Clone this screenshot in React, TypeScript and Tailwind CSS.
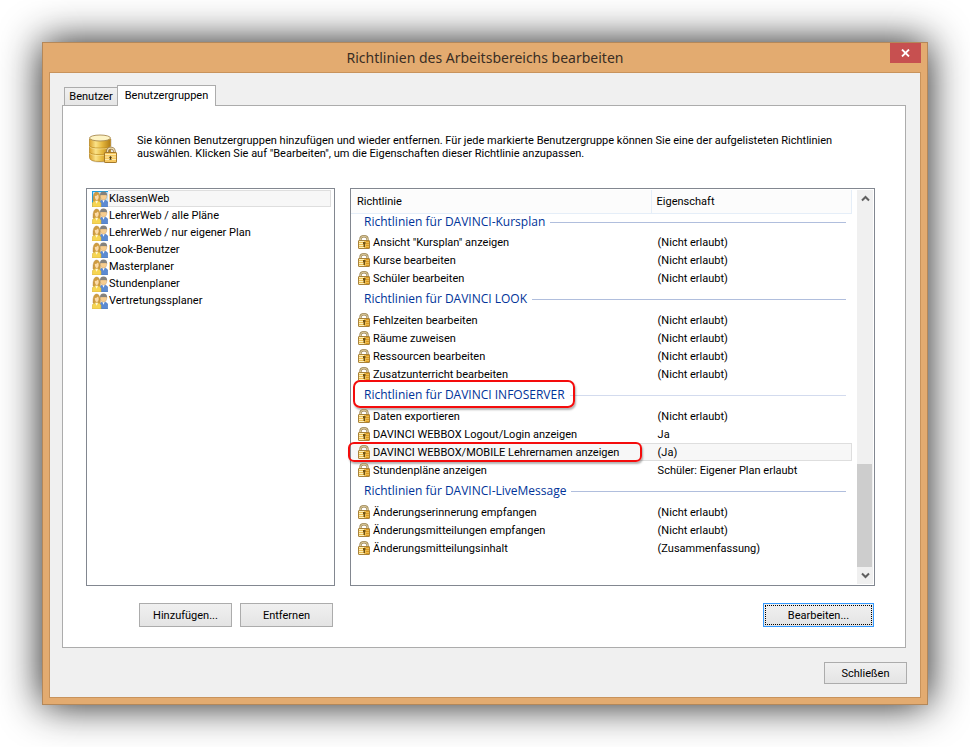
type Policy = { name: string; value: string; selected?: boolean };
type Section = { title: string; marked?: boolean; policies: Policy[] };

const DENIED = '(Nicht erlaubt)';

const userGroups = [
  'KlassenWeb',
  'LehrerWeb / alle Pläne',
  'LehrerWeb / nur eigener Plan',
  'Look-Benutzer',
  'Masterplaner',
  'Stundenplaner',
  'Vertretungssplaner',
];

const sections: Section[] = [
  {
    title: 'Richtlinien für DAVINCI-Kursplan',
    policies: [
      { name: 'Ansicht "Kursplan" anzeigen', value: DENIED },
      { name: 'Kurse bearbeiten', value: DENIED },
      { name: 'Schüler bearbeiten', value: DENIED },
    ],
  },
  {
    title: 'Richtlinien für DAVINCI LOOK',
    policies: [
      { name: 'Fehlzeiten bearbeiten', value: DENIED },
      { name: 'Räume zuweisen', value: DENIED },
      { name: 'Ressourcen bearbeiten', value: DENIED },
      { name: 'Zusatzunterricht bearbeiten', value: DENIED },
    ],
  },
  {
    title: 'Richtlinien für DAVINCI INFOSERVER',
    marked: true,
    policies: [
      { name: 'Daten exportieren', value: DENIED },
      { name: 'DAVINCI WEBBOX Logout/Login anzeigen', value: 'Ja' },
      { name: 'DAVINCI WEBBOX/MOBILE Lehrernamen anzeigen', value: '(Ja)', selected: true },
      { name: 'Stundenpläne anzeigen', value: 'Schüler: Eigener Plan erlaubt' },
    ],
  },
  {
    title: 'Richtlinien für DAVINCI-LiveMessage',
    policies: [
      { name: 'Änderungserinnerung empfangen', value: DENIED },
      { name: 'Änderungsmitteilungen empfangen', value: DENIED },
      { name: 'Änderungsmitteilungsinhalt', value: '(Zusammenfassung)' },
    ],
  },
];

function LockIcon() {
  return (
    <svg className="block shrink-0" width="12" height="14" viewBox="0 0 12 14" aria-hidden="true">
      <path d="M2.500 6.500V4q0-2.800 3.500-2.800T9.500 4v2.500" fill="none" stroke="#a08a5a" strokeWidth="2.400" />
      <path d="M2.500 6.500V4q0-2.800 3.500-2.800T9.500 4v2.500" fill="none" stroke="#e2d3a4" strokeWidth="0.900" />
      <rect x="0.500" y="5.500" width="11" height="8" rx="0.500" fill="#ecbc50" stroke="#a8823a" />
      <path d="M1 6.500h5M1 8.500h5M1 10.500h5M1 12.500h5" stroke="#fdf0b8" />
      <path d="M8 6.500h3M8 8.500h3M8 10.500h3M8 12.500h3" stroke="#dc9a20" />
      <path d="M5 7h2.500v2H7v3H5.500V9H5z" fill="#705214" />
    </svg>
  );
}

function UsersIcon({ selected = false }: { selected?: boolean }) {
  return (
    <svg className="block shrink-0" width="16" height="16" viewBox="0 0 16 16" aria-hidden="true">
      {selected && <path d="M0 0h16v1H1v15H0z" fill="#1a9fe0" />}
      {selected && <path d="M1 1h15v12H1z" fill="#c3e0f3" />}
      <path d="M8 16V11q1-2.200 3.500-2.200t4.300 2.200v5z" fill="#5b8ad2" stroke="#4771b4" strokeWidth="0.500" />
      <path d="M10.300 8.800l1.200 3 1.300-3z" fill="#fff" />
      <path d="M8.400 4h6.400q.2 5-3.300 5T8.400 4z" fill="#f6cd90" stroke="#c09763" strokeWidth="0.400" />
      <path d="M8 4.500Q7.800.5 11.500.5T15.200 4.500L14 4H9z" fill="#85827c" />
      <path d="M1 9.500Q.8 1 4.600 1T8.400 9.500L7 11H2.300z" fill="#cf9c40" stroke="#ad7f34" strokeWidth="0.400" />
      <path d="M.2 16V12Q1.200 9.800 4.600 9.800T9 12v4z" fill="#f6d552" stroke="#cda636" strokeWidth="0.500" />
      <path d="M2.800 5q1.800 0 3.200-1.500.8 1 .7 3Q6.300 9 4.700 9T2.800 5z" fill="#fbdba8" />
      <path d="M3.200 9.800l1.400 3 1.500-3z" fill="#fff6d8" />
    </svg>
  );
}

function DatabaseLockIcon() {
  return (
    <svg className="block" width="32" height="32" viewBox="0 0 32 32" aria-hidden="true">
      <defs>
        <linearGradient id="drum" x1="0" x2="1">
          <stop offset="0" stopColor="#d9a02c" />
          <stop offset="0.300" stopColor="#fbe388" />
          <stop offset="0.600" stopColor="#e6b83e" />
          <stop offset="1" stopColor="#b07c14" />
        </linearGradient>
      </defs>
      <path d="M3 5v20q0 4 11 4t10-4V5z" fill="#d6d6d6" opacity="0.600" />
      <path d="M1.500 5v18.500q0 4 10.500 4t10.500-4V5z" fill="url(#drum)" stroke="#b98a2a" strokeWidth="0.800" />
      <path d="M1.500 11.500q0 2.600 10.500 2.600t10.500-2.600M1.500 18q0 2.600 10.500 2.600T22.500 18" fill="none" stroke="#bd8a20" strokeWidth="0.800" />
      <path d="M1.500 12.300q0 2.600 10.500 2.600t10.500-2.600M1.500 18.800q0 2.600 10.500 2.600t10.500-2.600" fill="none" stroke="#fdeeb0" strokeWidth="0.500" />
      <ellipse cx="12" cy="4" rx="10.500" ry="3" fill="#fdf3c4" stroke="#a88a50" strokeWidth="0.900" />
      <path d="M19.500 20v-2.500a3.400 3.400 0 0 1 6.800 0V20" fill="none" stroke="#957a50" strokeWidth="2.800" />
      <path d="M19.500 20v-2.500a3.400 3.400 0 0 1 6.800 0V20" fill="none" stroke="#f0deb0" strokeWidth="1.200" />
      <rect x="16.500" y="18.500" width="12" height="10" rx="0.600" fill="#f7c860" stroke="#a5792a" />
      <path d="M17 20.500h11M17 23h11M17 25.500h11" stroke="#fdebae" />
      <path d="M21 23.500l1.500-1.500 1.500 1.500-.9.500v1l.9.800h-3l.9-.8v-1z" fill="#4e3b12" />
    </svg>
  );
}

function Chevron({ down = false }: { down?: boolean }) {
  return (
    <svg width="9" height="7" viewBox="0 0 9 7" aria-hidden="true">
      <path d={down ? 'M1 1.500l3.500 3.500L8 1.500' : 'M1 5.500L4.500 2 8 5.500'} fill="none" stroke="#606060" strokeWidth="2" />
    </svg>
  );
}

const buttonStyle = 'border border-[#acacac] bg-linear-to-b from-[#f0f0f0] to-[#e4e4e4] text-center';

export default function App() {
  return (
    <div className="bg-white p-[42px] font-['Roboto','Noto_Sans',sans-serif] text-[11px] leading-[13px] text-black">
      <main className="border border-[#b4885a] bg-[#e3ab70] px-[6px] pb-[6px] shadow-[0_0_38px_rgba(0,0,0,0.9)]">
        <header className="grid h-[29px] grid-cols-[36px_1fr_36px]">
          <h1 className="col-start-2 pt-[5px] text-center font-['Noto_Sans','Open_Sans',sans-serif] text-[14px] leading-[20px] text-[#3a2e24]">
            Richtlinien des Arbeitsbereichs bearbeiten
          </h1>
          <button type="button" aria-label="Fenster schließen" className="flex h-5 w-[31px] items-center justify-center self-start justify-self-end bg-[#c75050]">
            <svg width="9" height="8" viewBox="0 0 9 8" aria-hidden="true">
              <path d="M1 .5l7 7M8 .5l-7 7" stroke="#fff" strokeWidth="1.800" />
            </svg>
          </button>
        </header>

        <div className="border border-[#c8935c] bg-[#f0f0f0] px-3 pt-3 pb-[13px]">
          <div role="tablist" className="flex items-end pl-[2px]">
            <button type="button" role="tab" aria-selected="false" className="h-[18px] w-[54px] border border-b-0 border-[#acacac] bg-linear-to-b from-[#f0f0f0] to-[#e6e6e6]">
              Benutzer
            </button>
            <button type="button" role="tab" aria-selected="true" className="relative z-10 -mb-px -ml-px h-[21px] w-[99px] border border-b-0 border-[#acacac] bg-white pb-px">
              Benutzergruppen
            </button>
          </div>

          <section role="tabpanel" className="mr-[2px] border border-[#acacac] bg-white px-[23px] pb-5">
            <div className="flex pt-7">
              <div className="w-[51px] shrink-0 pl-[2px]">
                <DatabaseLockIcon />
              </div>
              <p className="max-w-[704px]">
                Sie können Benutzergruppen hinzufügen und wieder entfernen. Für jede markierte Benutzergruppe können Sie eine der aufgelisteten Richtlinien auswählen. Klicken Sie auf "Bearbeiten", um die Eigenschaften dieser Richtlinie anzupassen.
              </p>
            </div>

            <div className="mt-[22px] flex gap-[15px] pr-[7px]">
              <ul aria-label="Benutzergruppen" className="w-[249px] shrink-0 border border-[#828790] py-px pr-[3px] pl-[5px]">
                {userGroups.map((group, index) => (
                  <li key={group} className="flex h-[17px] items-center">
                    <UsersIcon selected={index === 0} />
                    <span className={index === 0 ? 'flex h-[17px] flex-1 items-center border border-l-0 border-[#dedede] bg-[#f7f7f7] pl-px' : 'pl-px'}>
                      {group}
                    </span>
                  </li>
                ))}
              </ul>

              <div className="flex min-h-[398px] min-w-0 flex-1 border border-[#828790] py-px pr-px">
                <div className="min-w-0 flex-1">
                  <table className="w-full table-fixed border-separate border-spacing-0 text-left">
                    <colgroup>
                      <col className="w-[60%]" />
                      <col className="w-[40%]" />
                    </colgroup>
                    <thead>
                      <tr className="h-6 bg-[#fcfcfc]">
                        <th className="border-r border-b border-[#e5eef8] p-0 pl-[6px] font-normal">Richtlinie</th>
                        <th className="border-r border-b border-[#e5eef8] p-0 pl-[5px] font-normal">Eigenschaft</th>
                      </tr>
                    </thead>
                    {sections.map((section, index) => (
                      <tbody key={section.title}>
                        <tr className={index === 0 ? 'h-[19px] align-top' : 'h-6'}>
                          <th colSpan={2} scope="rowgroup" className="p-0 pr-[6px] pl-[2px] font-normal">
                            <div className="flex items-center gap-[5px]">
                              <span className="relative pl-[11px] font-['Open_Sans','Noto_Sans',sans-serif] text-[12px] leading-[16px] whitespace-nowrap text-[#003399]">
                                {section.title}
                                {section.marked && (
                                  <span className="absolute -top-[7px] left-0 h-7 w-[222px] rounded-[7px] border-2 border-[#f40c0c] shadow-[1px_2px_2px_rgba(0,0,0,0.3)]" />
                                )}
                              </span>
                              <span className={section.marked ? 'h-px flex-1 bg-[#d3dbee]' : 'h-px flex-1 bg-[#b0bedd]'} />
                            </div>
                          </th>
                        </tr>
                        {section.policies.map((policy) => (
                          <tr key={policy.name} className="h-[18px]">
                            <td className={policy.selected ? 'border-y border-[#dedede] bg-[#f7f7f7] p-0' : 'p-0'}>
                              <div className="relative flex items-center gap-[3px] pl-[7px] whitespace-nowrap">
                                <LockIcon />
                                <span>{policy.name}</span>
                                {policy.selected && (
                                  <span className="absolute -top-[3px] -left-[3px] h-5 w-[294px] rounded-[6px] border-2 border-[#f40c0c] shadow-[1px_2px_2px_rgba(0,0,0,0.3)]" />
                                )}
                              </div>
                            </td>
                            <td className={policy.selected ? 'border-y border-r border-[#dedede] bg-[#f7f7f7] p-0 pl-[6px]' : 'p-0 pl-[6px]'}>
                              {policy.value}
                            </td>
                          </tr>
                        ))}
                      </tbody>
                    ))}
                  </table>
                </div>
                <div className="ml-[5px] flex w-4 flex-col bg-[#f0f0f0]">
                  <button type="button" aria-label="Nach oben" className="flex h-[17px] items-center justify-center">
                    <Chevron />
                  </button>
                  <div className="grow-[257]" />
                  <div className="mr-px grow-[103] bg-[#cdcdcd]" />
                  <button type="button" aria-label="Nach unten" className="flex h-[17px] items-center justify-center">
                    <Chevron down />
                  </button>
                </div>
              </div>
            </div>

            <div className="mt-[17px] flex pr-2 pl-[53px]">
              <button type="button" className={`${buttonStyle} h-6 w-[93px]`}>Hinzufügen...</button>
              <button type="button" className={`${buttonStyle} ml-2 h-6 w-[93px]`}>Entfernen</button>
              <button type="button" className="ml-auto h-6 w-[111px] border border-[#3399ff] bg-linear-to-b from-[#f0f0f0] to-[#e4e4e4] p-px">
                <span className="flex h-full items-center justify-center border border-dotted border-black">Bearbeiten...</span>
              </button>
            </div>
          </section>

          <footer className="mt-[14px] flex justify-end pr-px">
            <button type="button" className={`${buttonStyle} h-[22px] w-[83px]`}>Schließen</button>
          </footer>
        </div>
      </main>
    </div>
  );
}
